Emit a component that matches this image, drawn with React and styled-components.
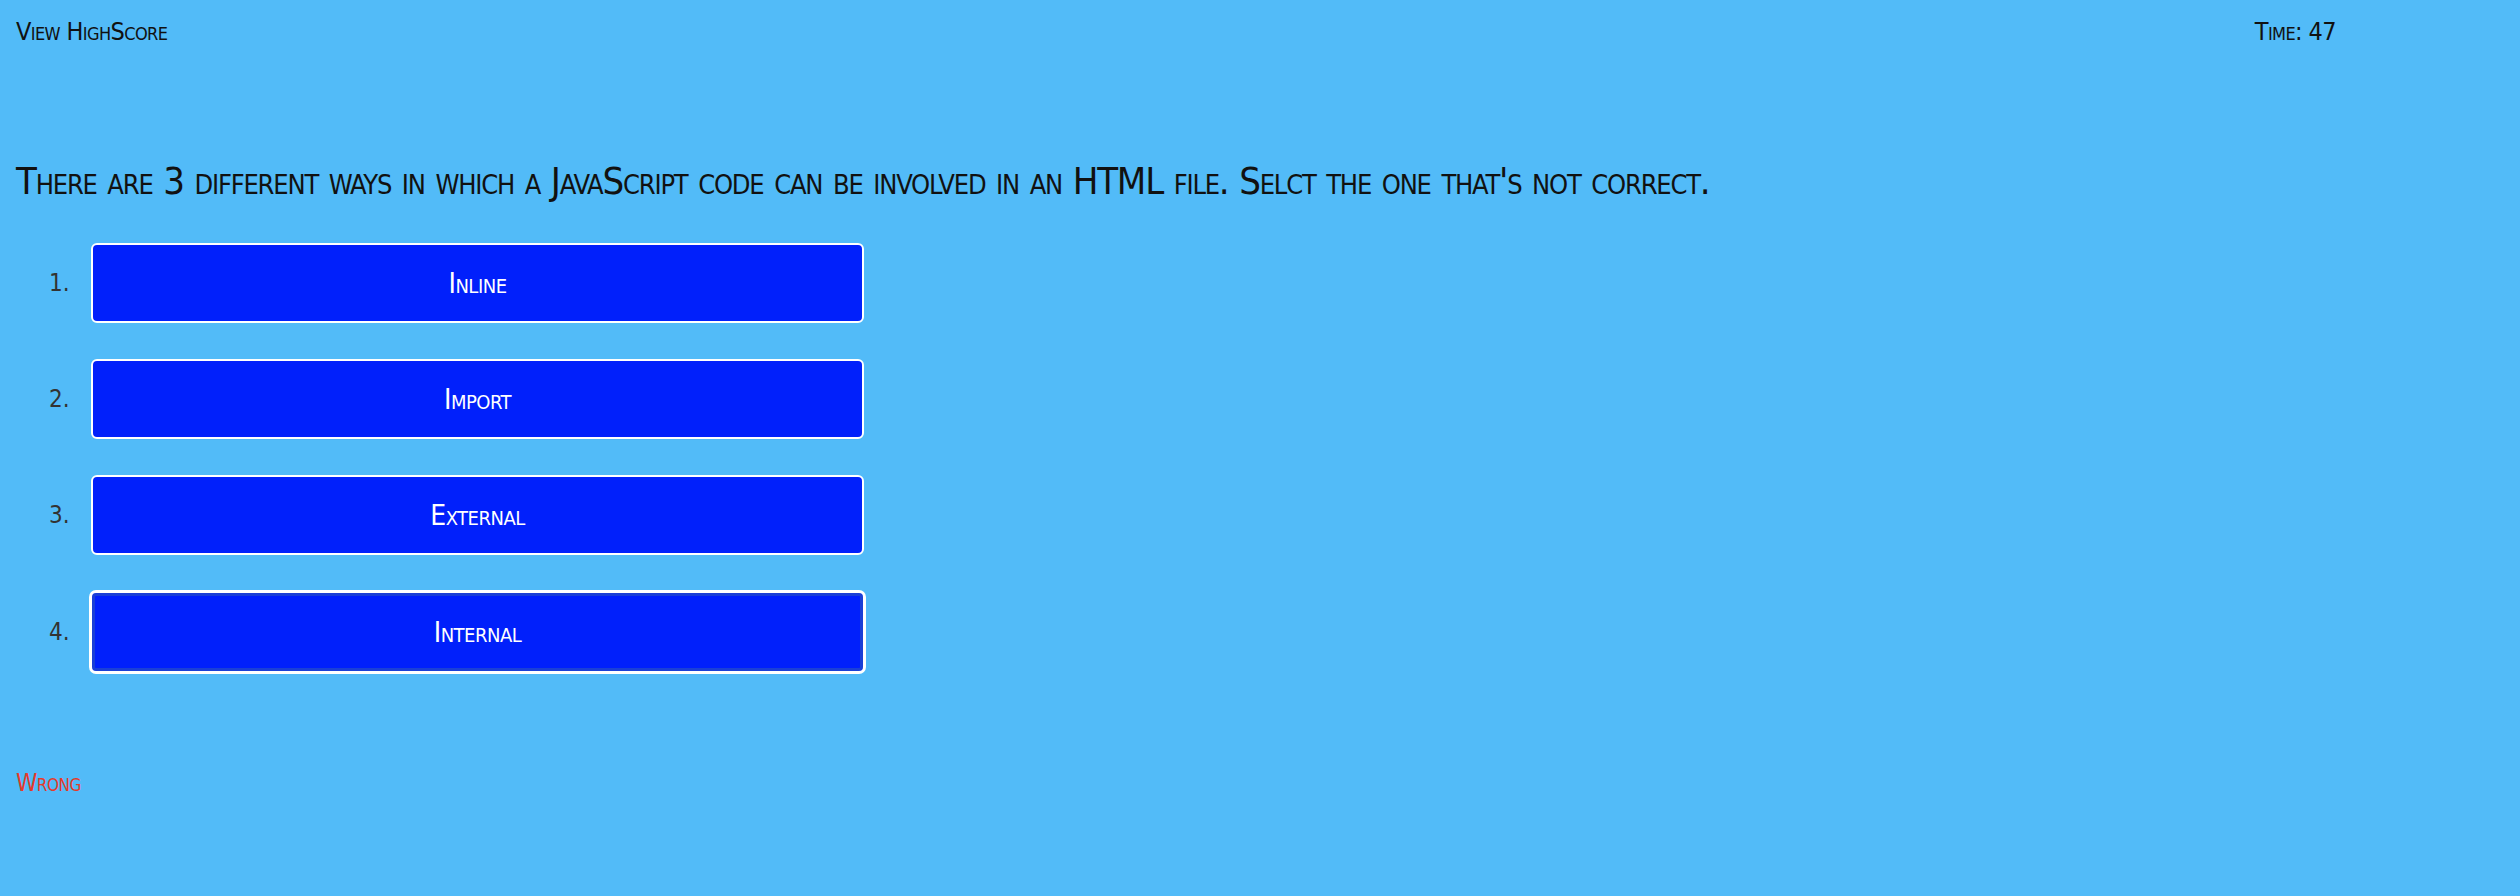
import React from "react";
import styled, { createGlobalStyle } from "styled-components";

const GlobalStyle = createGlobalStyle`
  html, body {
    margin: 0;
    padding: 0;
    background: #52bbf8;
  }
  body {
    font-family: "DejaVu Sans Condensed", "Liberation Sans Narrow", "Liberation Sans", sans-serif;
    font-variant: small-caps;
    color: #111;
  }
`;

const Page = styled.div`
  min-height: 896px;
  padding: 0 16px;
  box-sizing: border-box;
`;

const Header = styled.header`
  display: flex;
  justify-content: space-between;
  align-items: center;
  height: 62px;
  padding-right: 168px;
  font-size: 25px;
  letter-spacing: -0.6px;
`;

const Question = styled.h1`
  margin: 89px 0 0;
  font-size: 38px;
  font-weight: normal;
  line-height: 60px;
  letter-spacing: -1.2px;
  word-spacing: 1px;
`;

const Choices = styled.ol`
  list-style: none;
  margin: 32px 0 0;
  padding: 0;
  display: flex;
  flex-direction: column;
  gap: 36px;
`;

const Choice = styled.li`
  display: flex;
  align-items: center;
`;

const Number = styled.span`
  width: 75px;
  padding-left: 33px;
  box-sizing: border-box;
  font-size: 24px;
  color: #333;
`;

const Answer = styled.button`
  width: 773px;
  height: 80px;
  background: #0120fb;
  color: #fff;
  border: 2px solid #fff;
  border-radius: 6px;
  font-family: inherit;
  font-variant: small-caps;
  font-size: 28px;
  font-weight: normal;
  letter-spacing: -0.5px;
  cursor: pointer;
  ${(p) =>
    p.$focused &&
    `
    box-shadow: inset 0 0 0 3px #1a3fd6, 0 0 0 1px #fff;
    width: 775px;
    height: 82px;
    margin-left: -1px;
  `}
`;

const Feedback = styled.p`
  margin: 96px 0 0;
  font-size: 24px;
  letter-spacing: -0.5px;
  color: #e53a2a;
`;

const answers = ["Inline", "Import", "External", "Internal"];

export default function App() {
  return (
    <Page>
      <GlobalStyle />
      <Header>
        <span>View HighScore</span>
        <span>Time: 47</span>
      </Header>
      <Question>
        There are 3 different ways in which a JavaScript code can be involved in an HTML file. Selct the one that's not correct.
      </Question>
      <Choices>
        {answers.map((a, i) => (
          <Choice key={a}>
            <Number>{i + 1}.</Number>
            <Answer $focused={i === 3}>{a}</Answer>
          </Choice>
        ))}
      </Choices>
      <Feedback>Wrong</Feedback>
    </Page>
  );
}
